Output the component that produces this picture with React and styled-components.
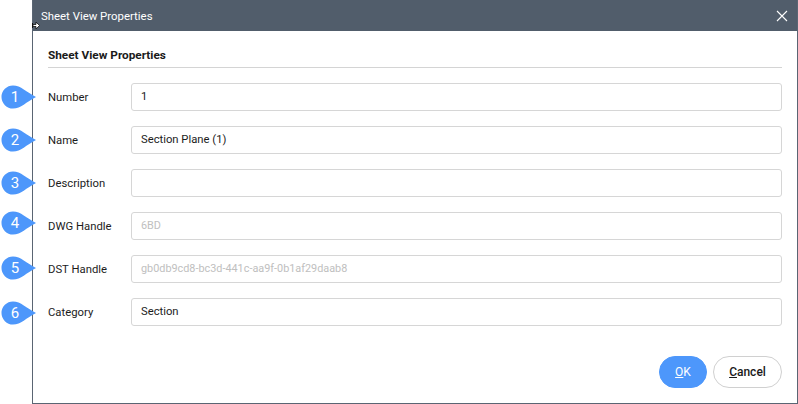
import React from 'react';
import styled, { createGlobalStyle } from 'styled-components';

const GlobalStyle = createGlobalStyle`
  html, body {
    margin: 0;
    padding: 0;
    background: #ffffff;
    font-family: Roboto, "Liberation Sans", sans-serif;
  }
`;

const fields = [
  { label: 'Number', value: '1', shift: 0 },
  { label: 'Name', value: 'Section Plane (1)', shift: 0 },
  { label: 'Description', value: '', shift: 0 },
  { label: 'DWG Handle', value: '6BD', disabled: true, shift: -3 },
  { label: 'DST Handle', value: 'gb0db9cd8-bc3d-441c-aa9f-0b1af29daab8', disabled: true, shift: -1 },
  { label: 'Category', value: 'Section', shift: 1 },
];

const Page = styled.div`
  width: 798px;
  height: 404px;
  padding-left: 32px;
  box-sizing: border-box;
  overflow: hidden;
`;

const Dialog = styled.div`
  position: relative;
  width: 766px;
  height: 404px;
  box-sizing: border-box;
  border: 1px solid #5a6573;
  border-top: 0;
  display: flex;
  flex-direction: column;
  background: #fff;
`;

const TitleBar = styled.div`
  height: 31px;
  flex: none;
  display: flex;
  align-items: center;
  justify-content: space-between;
  padding: 0 9px 0 8px;
  background: #515d6b;
  color: #fff;
  font-size: 11.4px;
`;

const CloseButton = styled.svg`
  width: 12px;
  height: 12px;
  display: block;
`;

const Cursor = styled.svg`
  position: absolute;
  left: -1px;
  top: 21px;
  width: 8px;
  height: 9px;
`;

const Body = styled.div`
  flex: 1;
  display: flex;
  flex-direction: column;
  padding: 16px 15px 15px 15px;
`;

const SectionTitle = styled.div`
  height: 20px;
  line-height: 16px;
  font-size: 11.8px;
  font-weight: 700;
  color: #1a1a1a;
  border-bottom: 1px solid #d4d4d4;
`;

const Form = styled.div`
  display: flex;
  flex-direction: column;
  gap: 15px;
  margin-top: 15px;
`;

const Row = styled.div`
  position: relative;
  display: flex;
  align-items: center;
  height: 28px;
`;

const Label = styled.label`
  width: 83px;
  flex: none;
  font-size: 11.3px;
  color: #1c1c1c;
`;

const Input = styled.div`
  flex: 1;
  height: 28px;
  box-sizing: border-box;
  padding: 0 9px;
  border: 1px solid #d6d6d6;
  border-radius: 3px;
  font-size: ${p => (p.$disabled ? '10.85px' : '11.25px')};
  line-height: 26px;
  color: ${p => (p.$disabled ? '#c0c0c0' : '#1c1c1c')};
`;

const Badge = styled.div`
  position: absolute;
  left: -47px;
  top: ${p => 2 + p.$shift}px;
  width: 35px;
  height: 24px;
`;

const BadgeShape = styled.svg`
  position: absolute;
  inset: 0;
  width: 35px;
  height: 24px;
`;

const BadgeNumber = styled.span`
  position: absolute;
  left: 2px;
  top: 0;
  width: 24px;
  line-height: 24px;
  text-align: center;
  color: #fff;
  font-size: 15px;
`;

const Footer = styled.div`
  margin-top: auto;
  display: flex;
  justify-content: flex-end;
  gap: 6px;
`;

const Button = styled.button`
  height: 32px;
  width: ${p => (p.$primary ? '48px' : '69px')};
  padding: 0;
  box-sizing: border-box;
  border-radius: 16px;
  border: 1px solid ${p => (p.$primary ? '#4d97fb' : '#d0d0d0')};
  background: ${p => (p.$primary ? '#4d97fb' : '#fff')};
  color: ${p => (p.$primary ? '#fff' : '#1a1a1a')};
  font-family: Roboto, "Liberation Sans", sans-serif;
  font-size: 12px;
  font-weight: ${p => (p.$primary ? 400 : 500)};
`;

const Key = styled.span`
  text-decoration: underline;
`;

const App = () => (
  <Page>
    <GlobalStyle />
    <Dialog>
      <TitleBar>
        <span>Sheet View Properties</span>
        <CloseButton viewBox="0 0 12 12">
          <path d="M1 1 L11 11 M11 1 L1 11" stroke="#fff" strokeWidth="1.1" fill="none" />
        </CloseButton>
      </TitleBar>
      <Cursor viewBox="0 0 8 9">
        <path d="M0.5 2 V7" stroke="#111" strokeWidth="1" fill="none" />
        <path d="M1 3.5 H4 V1 L7.5 4.5 L4 8 V5.5 H1 Z" stroke="#111" strokeWidth="0.8" fill="#fff" />
      </Cursor>
      <Body>
        <SectionTitle>Sheet View Properties</SectionTitle>
        <Form>
          {fields.map((f, i) => (
            <Row key={f.label}>
              <Badge $shift={f.shift}>
                <BadgeShape viewBox="0 0 35 24">
                  <path d="M12 0.5 C20 0.5 25 7 35 12 C25 17 20 23.5 12 23.5 A11.5 11.5 0 0 1 12 0.5 Z" fill="#4d97fb" />
                </BadgeShape>
                <BadgeNumber>{i + 1}</BadgeNumber>
              </Badge>
              <Label>{f.label}</Label>
              <Input $disabled={f.disabled}>{f.value}</Input>
            </Row>
          ))}
        </Form>
        <Footer>
          <Button $primary><Key>O</Key>K</Button>
          <Button><Key>C</Key>ancel</Button>
        </Footer>
      </Body>
    </Dialog>
  </Page>
);

export default App;
